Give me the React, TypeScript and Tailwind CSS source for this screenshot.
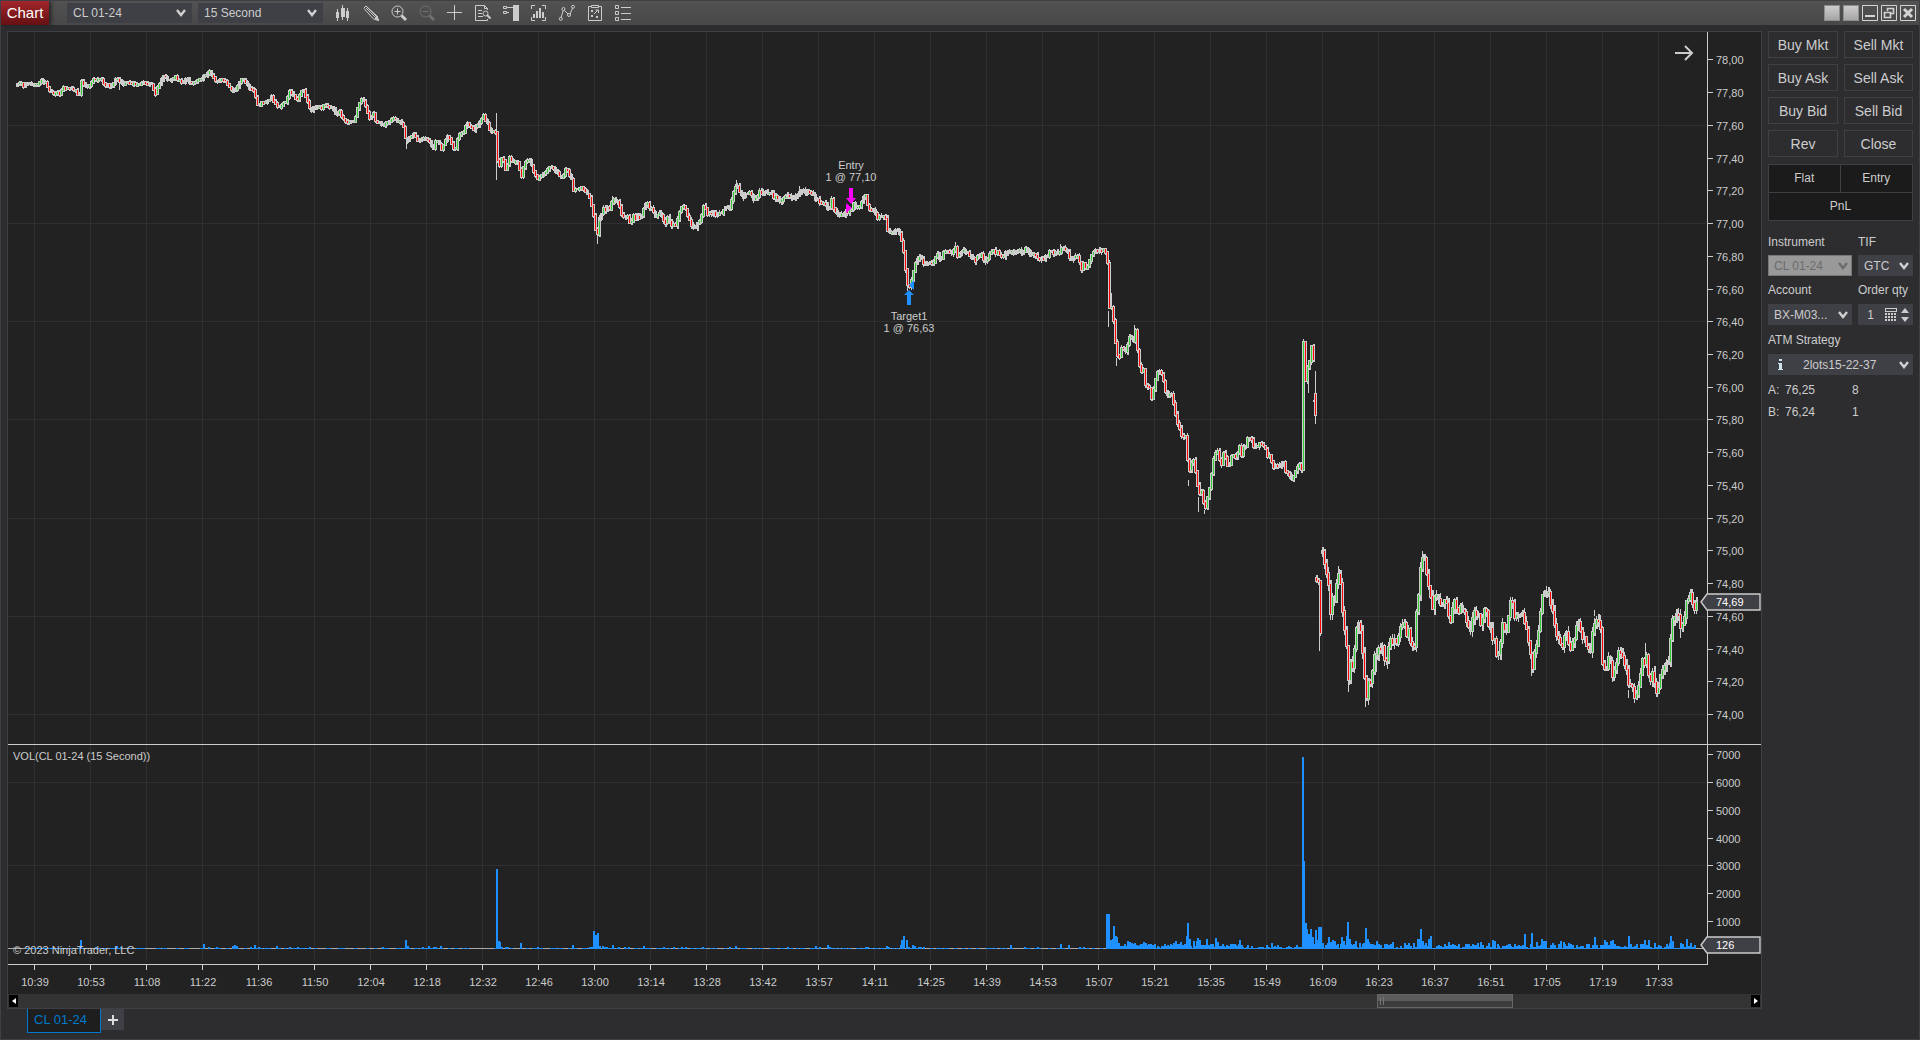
import type { ReactNode } from "react";
import clsx from "clsx";

const TIMES = [
  "10:39", "10:53", "11:08", "11:22", "11:36", "11:50", "12:04", "12:18", "12:32", "12:46",
  "13:00", "13:14", "13:28", "13:42", "13:57", "14:11", "14:25", "14:39", "14:53", "15:07",
  "15:21", "15:35", "15:49", "16:09", "16:23", "16:37", "16:51", "17:05", "17:19", "17:33",
];

interface Trace {
  ox: number;
  oy: number;
  sx: number;
  noise: number;
  pts: number[];
}

// x, y pairs of the price trace, three units to a pixel down and sx across
const TRACES: Trace[] = [
  {
    ox: 0, oy: 30, sx: 2.529, noise: 4,
    pts: [
      42, 168, 50, 158, 62, 168, 75, 155, 90, 162, 112, 150, 128, 190, 150, 188, 158, 175, 178, 175, 200, 192, 205, 156,
      222, 175, 235, 144, 255, 150, 262, 163, 280, 167, 295, 142, 305, 158, 340, 160, 380, 160, 392, 188, 412, 138,
      425, 155, 442, 140, 462, 158, 470, 146, 480, 160, 510, 146, 528, 120, 548, 156, 560, 142, 580, 172, 590, 185,
      612, 146, 630, 176, 640, 182, 650, 225, 680, 212, 685, 200, 702, 235, 722, 216, 730, 180, 750, 206, 765, 180,
      783, 240, 800, 232, 835, 225, 850, 255, 858, 240, 865, 268, 880, 276, 895, 272, 903, 232, 915, 205, 935, 266,
      942, 242, 950, 275, 968, 284, 980, 272, 998, 264, 1020, 288, 1027, 340, 1035, 316, 1045, 315, 1055, 330,
      1077, 325, 1095, 350, 1103, 325, 1115, 358, 1132, 315, 1148, 362, 1160, 310, 1170, 305, 1180, 275, 1195, 300,
      1222, 258, 1240, 302, 1253, 310, 1256, 385, 1262, 405, 1270, 375, 1278, 425, 1287, 378, 1300, 400, 1306, 388,
      1318, 440, 1325, 400, 1335, 385, 1357, 450, 1375, 430, 1390, 412, 1405, 420, 1418, 445, 1430, 415, 1442, 435,
      1450, 482, 1470, 468, 1490, 500, 1500, 560, 1504, 592, 1511, 618, 1516, 565,
    ],
  },
  {
    ox: 480, oy: 100, sx: 3, noise: 6,
    pts: [
      357, 355, 370, 325, 385, 325, 400, 300, 412, 300, 422, 345, 440, 350, 448, 362, 460, 350, 480, 358, 494, 305,
      510, 322, 522, 348, 545, 340, 553, 378, 562, 345, 570, 375, 583, 380, 600, 325, 612, 320, 630, 370, 642, 385,
      660, 355, 668, 318, 680, 340, 700, 338, 710, 345, 735, 325, 748, 320, 757, 285, 769, 258, 788, 290, 805, 275,
      820, 296, 835, 280, 860, 276, 880, 288, 900, 300, 915, 285, 940, 298, 957, 272, 990, 276, 1010, 300, 1022, 315,
      1038, 310, 1044, 340, 1053, 300, 1067, 345, 1080, 345, 1100, 335, 1112, 330, 1118, 310, 1125, 322, 1140, 312,
      1155, 285, 1165, 335, 1180, 325, 1190, 350, 1215, 350, 1222, 400, 1235, 400, 1255, 390, 1268, 450, 1275, 510,
      1280, 560, 1293, 545, 1300, 505, 1315, 465, 1335, 495, 1343, 480, 1355, 498, 1370, 460, 1380, 485, 1390, 455,
      1410, 460, 1415, 468, 1425, 435, 1432, 470, 1450, 455, 1475, 470, 1490, 480,
    ],
  },
  {
    ox: 900, oy: 220, sx: 3, noise: 6,
    pts: [
      232, 114, 240, 105, 258, 122, 272, 95, 290, 95, 305, 105, 330, 94, 370, 94, 378, 85, 390, 105, 400, 98, 412, 118,
      440, 108, 450, 92, 470, 98, 482, 88, 498, 85, 508, 115, 520, 112, 530, 98, 540, 145, 550, 130, 558, 145,
      572, 100, 590, 92, 605, 90, 620, 100, 624, 205, 628, 275, 636, 260, 642, 340, 650, 410, 656, 415, 662, 378,
      678, 395, 685, 345, 700, 360, 705, 330, 712, 405, 720, 460, 726, 435, 737, 500, 744, 485, 752, 540, 760, 505,
      768, 460, 775, 440, 790, 490, 802, 530, 812, 520, 828, 590, 840, 640, 858, 650, 864, 780, 870, 730, 880, 725,
      890, 790, 895, 832, 902, 805, 914, 870, 922, 830, 932, 770, 940, 710, 948, 685, 963, 740, 970, 695, 983, 745,
      995, 695, 1005, 710, 1020, 665, 1022, 705, 1040, 660, 1052, 655, 1060, 680, 1080, 670, 1100, 700, 1110, 710,
      1118, 740, 1135, 735, 1148, 730, 1158, 755, 1170, 775, 1185, 755, 1195, 735, 1205, 748, 1207, 480, 1209, 370,
      1213, 490, 1220, 450, 1228, 415, 1235, 372, 1239, 418,
    ],
  },
  { ox: 1280, oy: 320, sx: 3, noise: 6, pts: [108, 775, 111, 732, 115, 800, 118, 930, 121, 940, 125, 900] },
  {
    ox: 1280, oy: 320, sx: 3, noise: 15,
    pts: [
      127, 700, 131, 715, 137, 750, 145, 810, 150, 870, 155, 820, 160, 865, 168, 795, 175, 765, 180, 790, 185, 870,
      190, 910, 197, 960, 203, 1060, 207, 1065, 212, 990, 218, 1045, 226, 940, 236, 910, 242, 950, 250, 1060,
      258, 1120, 265, 1060, 272, 1095, 280, 1010, 295, 980, 305, 990, 320, 1015, 330, 945, 348, 970, 358, 930,
      370, 905, 378, 960, 383, 905, 393, 975, 402, 975, 410, 860, 418, 770, 427, 705, 435, 740, 443, 780, 450, 830,
      458, 870, 462, 840, 472, 825, 485, 860, 495, 840, 510, 905, 520, 845, 535, 875, 550, 860, 568, 930, 585, 880,
      592, 870, 600, 915, 615, 870, 628, 920, 645, 980, 653, 1018, 665, 910, 675, 940, 690, 845, 710, 895, 728, 880,
      740, 930, 755, 1045, 770, 950, 785, 840, 800, 815, 815, 860, 830, 950, 845, 980, 856, 915, 868, 985, 880, 970,
      896, 895, 905, 950, 928, 1000, 945, 885, 960, 930, 966, 1020, 978, 1045, 988, 1005, 998, 1065, 1016, 985,
      1030, 1035, 1040, 1055, 1048, 1105, 1056, 1095, 1065, 1135, 1085, 1030, 1097, 1010, 1108, 1085, 1115, 1060,
      1128, 1120, 1140, 1070, 1155, 1040, 1165, 1020, 1172, 910, 1185, 880, 1204, 920, 1213, 880, 1224, 830,
      1234, 835, 1242, 865, 1248, 850,
    ],
  },
];

// x, top, bottom of the long wicks
const WICKS = [
  [119, 83, 90], [406, 143, 149], [496, 113, 180], [597, 235, 244], [612, 196, 203], [736, 180, 186], [799, 186, 191],
  [907, 286, 291], [955, 242, 248], [1060, 244, 249], [1108, 311, 327], [1111, 293, 306], [1116, 358, 366],
  [1134, 325, 331], [1188, 480, 486], [1198, 497, 512], [1204, 510, 514], [1308, 376, 393], [1315, 371, 424],
  [1319, 633, 651], [1338, 566, 575], [1348, 674, 692], [1365, 690, 707], [1376, 650, 672], [1387, 655, 669],
  [1422, 551, 557], [1531, 668, 676], [1594, 610, 616], [1612, 678, 682], [1628, 690, 698], [1645, 643, 656],
  [1680, 628, 638], [1691, 591, 597],
];

// x, bar height
const VOLUME = [
  [80, 9], [95, 2], [116, 3], [120, 2], [203, 5], [208, 2], [216, 2], [232, 3], [234, 4], [236, 3], [250, 2], [254, 4],
  [258, 2], [276, 3], [289, 2], [297, 2], [309, 2], [382, 2], [405, 9], [407, 3], [422, 2], [428, 3], [433, 2],
  [435, 2], [440, 3], [496, 80], [498, 8], [499, 7], [501, 2], [505, 2], [507, 2], [520, 6], [537, 2], [572, 4],
  [589, 2], [591, 2], [593, 18], [595, 14], [597, 16], [599, 3], [602, 3], [604, 2], [606, 2], [612, 4], [618, 2],
  [624, 2], [628, 2], [643, 3], [663, 2], [673, 2], [681, 2], [685, 2], [702, 2], [729, 2], [735, 3], [787, 2],
  [815, 3], [819, 2], [827, 4], [829, 2], [865, 2], [867, 2], [886, 3], [888, 2], [900, 4], [901, 9], [903, 13],
  [906, 9], [908, 2], [912, 4], [914, 3], [918, 2], [920, 2], [923, 2], [1010, 4], [1024, 2], [1037, 2], [1060, 5],
  [1068, 4], [1079, 2], [1083, 2], [1106, 35], [1108, 35], [1110, 9], [1112, 10], [1113, 23], [1115, 13], [1116, 12],
  [1118, 6], [1121, 3], [1127, 8], [1129, 7], [1131, 6], [1133, 5], [1134, 6], [1136, 4], [1139, 4], [1143, 7],
  [1145, 6], [1147, 4], [1150, 5], [1152, 4], [1157, 3], [1161, 3], [1167, 4], [1169, 3], [1173, 6], [1175, 8],
  [1177, 5], [1180, 7], [1182, 4], [1185, 5], [1186, 13], [1187, 26], [1189, 10], [1193, 8], [1196, 8], [1197, 11],
  [1199, 9], [1201, 4], [1206, 10], [1212, 5], [1215, 11], [1217, 7], [1223, 3], [1228, 3], [1233, 3], [1235, 4],
  [1238, 5], [1239, 9], [1241, 4], [1247, 4], [1251, 3], [1266, 4], [1271, 6], [1274, 3], [1277, 4], [1288, 3],
  [1296, 4], [1302, 192], [1303, 88], [1305, 26], [1306, 20], [1308, 15], [1310, 20], [1312, 12], [1315, 19],
  [1317, 9], [1318, 22], [1320, 22], [1322, 6], [1325, 4], [1327, 6], [1328, 12], [1330, 7], [1332, 9], [1334, 8],
  [1337, 5], [1341, 12], [1343, 8], [1346, 13], [1347, 27], [1349, 10], [1353, 5], [1355, 8], [1359, 6], [1363, 6],
  [1365, 21], [1367, 10], [1368, 7], [1372, 5], [1376, 8], [1380, 4], [1392, 7], [1404, 6], [1408, 6], [1413, 6],
  [1417, 10], [1419, 10], [1420, 20], [1422, 8], [1425, 6], [1428, 10], [1430, 13], [1448, 7], [1465, 5], [1468, 5],
  [1477, 6], [1480, 7], [1488, 6], [1492, 9], [1494, 8], [1497, 5], [1509, 5], [1524, 15], [1531, 16], [1536, 7],
  [1541, 10], [1543, 8], [1545, 8], [1552, 6], [1560, 8], [1563, 7], [1568, 6], [1594, 12], [1604, 9], [1606, 7],
  [1610, 8], [1612, 9], [1628, 13], [1636, 5], [1644, 9], [1648, 9], [1654, 6], [1669, 6], [1670, 13], [1672, 8],
  [1680, 6], [1686, 10], [1690, 6],
];

function makeRandom(seed: number) {
  let s = seed;
  return () => {
    s = (s * 16807) % 2147483647;
    return s / 2147483647;
  };
}

const rect = (x: number, y: number, w: number, h: number) => `M${x} ${y}h${w}v${h}h${-w}z`;

function buildCandles() {
  const rnd = makeRandom(77);
  let outline = "";
  let up = "";
  let down = "";
  for (const t of TRACES) {
    const xs: number[] = [];
    const ys: number[] = [];
    for (let i = 0; i < t.pts.length; i += 2) {
      xs.push(t.ox + t.pts[i] / t.sx);
      ys.push(t.oy + t.pts[i + 1] / 3);
    }
    let prev = Math.round(ys[0]);
    let k = 0;
    for (let x = Math.round(xs[0]); x <= xs[xs.length - 1]; x += 2) {
      while (k < xs.length - 2 && xs[k + 1] < x) k++;
      const f = Math.min(1, Math.max(0, (x - xs[k]) / (xs[k + 1] - xs[k])));
      const y = Math.round(ys[k] + (ys[k + 1] - ys[k]) * f + ((rnd() - 0.5) * t.noise * 2) / 3);
      const top = Math.min(prev, y) - 1;
      const h = Math.abs(y - prev) + (rnd() > 0.35 ? 3 : 2);
      outline += rect(x - 1, top, 3, h);
      if (h > 2 && (h > 7 || rnd() > 0.4)) {
        if (y <= prev) up += rect(x, top + 1, 1, h - 2);
        else down += rect(x, top + 1, 1, h - 2);
      }
      const high = Math.round(rnd() * t.noise * 0.35);
      const low = Math.round(rnd() * t.noise * 0.35);
      outline += rect(x, top - high, rnd() > 0.5 ? 2 : 1, high);
      outline += rect(x, top + h, rnd() > 0.5 ? 2 : 1, low);
      prev = y;
    }
  }
  for (const [x, a, b] of WICKS) outline += rect(x, a, 1, b - a);
  return { outline, up, down };
}

function buildVolume() {
  const rnd = makeRandom(4242);
  let d = "";
  for (let x = 24; x < 1696; x += 2) {
    if (x < 1106) {
      if (rnd() > 0.6) d += rect(x, 948, 3, 1);
    } else {
      const busy = x < 1240 || x > 1302;
      const h = 1 + Math.floor(rnd() * (busy ? 5 : 2));
      d += rect(x, 949 - h, 2, h);
    }
  }
  for (const [x, h] of VOLUME) d += rect(x, 949 - h, 2, h);
  return d;
}

const candles = buildCandles();
const volume = buildVolume();

const PRICE_TICKS = Array.from({ length: 21 }, (_, i) => ({
  y: Math.round(714 - i * 32.73),
  label: (74 + i * 0.2).toFixed(2).replace(".", ","),
}));
const VOL_TICKS = [7, 6, 5, 4, 3, 2, 1].map(n => ({ y: Math.round(948.6 - n * 27.77), label: `${n}000` }));

function PriceTag({ y, label }: { y: number; label: string }) {
  return (
    <g>
      <path d={`M1701 ${y}L1707 ${y - 8}H1760V${y + 8}H1707z`} fill="#3f3f46" stroke="#cccccc" strokeWidth={1.4} />
      <text x={1716} y={y + 4} className="fill-white">{label}</text>
    </g>
  );
}

function Chart() {
  return (
    <svg viewBox="8 32 1753 962" preserveAspectRatio="xMinYMin meet" className="block h-full w-full text-[11px]" fill="#cccccc">
      <g shapeRendering="crispEdges">
        {/* Grid */}
        {TIMES.map((t, i) => <rect key={t} x={34 + i * 56} y={32} width={1} height={929} fill="#303032" />)}
        {[125, 223, 321, 419, 518, 616, 714, 782, 865].map(y => (
          <rect key={y} x={8} y={y} width={1698} height={1} fill="#303032" />
        ))}

        {/* Volume */}
        <rect x={8} y={948} width={1696} height={1} fill="#aaaaaa" />
        <path d={volume} fill="#1e90ff" />

        {/* Price */}
        <path d={candles.outline} fill="#cccccc" />
        <path d={candles.up} fill="#32cd32" />
        <path d={candles.down} fill="#ff0000" />
        <path d="M1313 400h2v2h-2zM1314 393h3v23h-3z" fill="#cccccc" />
        <path d="M1315 394h1v21h-1z" fill="#ff0000" />

        {/* Axes */}
        <rect x={1707} y={32} width={1} height={933} />
        <rect x={8} y={744} width={1753} height={1} />
        <rect x={8} y={964} width={1700} height={1} />
        {[...PRICE_TICKS, ...VOL_TICKS].map(t => <rect key={t.label} x={1708} y={t.y} width={5} height={1} />)}
        {TIMES.map((t, i) => <rect key={t} x={34 + i * 56} y={965} width={1} height={5} />)}
      </g>

      {[...PRICE_TICKS, ...VOL_TICKS].map(t => <text key={t.label} x={1716} y={t.y + 5}>{t.label}</text>)}
      {TIMES.map((t, i) => <text key={t} x={35 + i * 56} y={986} textAnchor="middle">{t}</text>)}
      <PriceTag y={602} label="74,69" />
      <PriceTag y={945} label="126" />
      <text x={13} y={760}>VOL(CL 01-24 (15 Second))</text>
      <text x={13} y={954}>© 2023 NinjaTrader, LLC</text>

      {/* Executions */}
      <g textAnchor="middle">
        <text x={851} y={169}>Entry</text>
        <text x={851} y={181}>1 @ 77,10</text>
        <text x={909} y={320}>Target1</text>
        <text x={909} y={332}>1 @ 76,63</text>
      </g>
      <path d="M849 188h4v10h3l-5 6-5-6h3zM846 203l6 5-6 5z" fill="#ff00ff" />
      <path d="M909 290l5 5h-3v10h-4v-10h-3zM914 280v10l-5-5z" fill="#1e90ff" />

      <path d="M1675 53h17M1685 46l7 7-7 7" fill="none" stroke="#cccccc" strokeWidth={2} />
    </svg>
  );
}

function Chevron({ className }: { className?: string }) {
  return (
    <svg viewBox="0 0 10 8" className={clsx("pointer-events-none absolute top-1/2 h-2 w-[10px] -translate-y-1/2", className)} fill="none" stroke="currentColor" strokeWidth={2.4}>
      <path d="M1 1l4 5 4-5" />
    </svg>
  );
}

interface PickerProps {
  id: string;
  value: string;
  label?: string;
  className?: string;
  selectClass?: string;
  chevronClass?: string;
  disabled?: boolean;
}

function Picker({ id, value, label, className, selectClass = "px-[6px]", chevronClass = "right-1 text-[#d0d0d0]", disabled }: PickerProps) {
  return (
    <div className={clsx("relative", className)}>
      <select
        id={id}
        aria-label={label}
        disabled={disabled}
        className={clsx(
          "block h-full w-full appearance-none text-xs outline-none disabled:opacity-100",
          disabled ? "border border-[#777777] bg-[#999999] text-[#6c6c6c]" : "bg-[#3f3f46] text-[#cccccc]",
          selectClass
        )}
      >
        <option>{value}</option>
      </select>
      <Chevron className={chevronClass} />
    </div>
  );
}

const TOOLS: { name: string; dim?: boolean; icon: ReactNode }[] = [
  {
    name: "Chart style",
    icon: <path fill="currentColor" stroke="none" d="M1 7h1V4h1v3h1v6H3v3H2v-3H1zM6 3h1V0h1v3h2v9H8v3H7v-3H6zM11 6h1V3h1v3h1v7h-1v3h-1v-3h-1z" />,
  },
  {
    name: "Drawing tools",
    icon: <><path d="M1 3l2-2 9 9M3 1L14 11l1.500 4.500L10.500 14 1 3.500M3 3l9 9M4 2l9 9" /><path fill="currentColor" d="M12 13l2-2 1.500 4.500z" /></>,
  },
  {
    name: "Zoom in",
    icon: <><circle cx="6.500" cy="6.500" r="5.500" /><path d="M3.500 6.500h6M6.500 3.500v6" /><path strokeWidth="3" d="M10.500 10.500l4.500 4.500" /></>,
  },
  {
    name: "Zoom out",
    dim: true,
    icon: <><circle cx="6.500" cy="6.500" r="5.500" /><path d="M3.500 6.500h6" /><path strokeWidth="3" d="M10.500 10.500l4.500 4.500" /></>,
  },
  { name: "Cross hair", icon: <path d="M0 7.500h15M7.500 0v15" /> },
  {
    name: "Data series",
    icon: <><path d="M12.500 5V3.500l-3-3h-9v15h12V14M9.500 .500v3h3M3 5.500h4M3 8.500h4M3 11.500h5" /><circle cx="10.500" cy="8.500" r="2.500" /><path strokeWidth="2" d="M12 10l3.500 3.500" /></>,
  },
  {
    name: "Chart trader",
    icon: <><path fill="currentColor" stroke="none" d="M10 0h6v16h-6z" /><path d="M.500 1.500h3v2h-3zM.500 6.500h3v2h-3zM4 2.500h6M4 7.500h2" /></>,
  },
  {
    name: "Indicators",
    icon: <><path d="M.500 4V.500H4M11 .500h3.500V4M.500 12v3.500H4M11 15.500h3.500V12" /><path fill="currentColor" stroke="none" d="M2 9h2v4H2zM5 6h2v7H5zM8 3h2v10H8zM11 7h2v6h-2z" /></>,
  },
  {
    name: "Strategies",
    icon: <><path d="M2 13l2.500-8.500 6 6L14 2" /><g fill="#4d4d4d"><circle cx="1.800" cy="13.800" r="1.500" /><circle cx="4.500" cy="4" r="1.500" /><circle cx="10" cy="10" r="1.500" /><circle cx="14" cy="1.800" r="1.500" /></g></>,
  },
  {
    name: "Properties",
    icon: <><path d="M4 1.500H1.500v14h13v-14H12M4.500 .500h7v2h-7zM4 5l2 2M6 5L4 7M4 10l2 2M6 10l-2 2M9 11l2 2M11 11l-2 2M7 9l4-4M8.500 5H11.500V8" /></>,
  },
  {
    name: "List",
    icon: <path d="M.500 .500h3v3h-3zM.500 6.500h3v3h-3zM.500 12.500h3v3h-3zM6 2.500h10M6 8.500h10M6 14.500h10" />,
  },
];

function TitleBar() {
  return (
    <header className="flex h-6 shrink-0 items-center bg-linear-to-b from-[#525252] to-[#484848] pr-[3px]">
      <div className="flex h-full w-12 items-center justify-center bg-linear-to-b from-[#a3262b] to-[#651013] text-[15px] text-white shadow-[2px_0_4px_#222222]">
        Chart
      </div>
      <Picker id="symbol" label="Instrument selector" value="CL 01-24" className="ml-[18px] h-5 w-[125px]" chevronClass="right-[6px] text-[#d0d0d0]" />
      <Picker id="interval" label="Interval selector" value="15 Second" className="ml-[6px] h-5 w-[125px]" chevronClass="right-[6px] text-[#d0d0d0]" />
      <div className="ml-3 flex gap-3">
        {TOOLS.map(t => (
          <button key={t.name} aria-label={t.name} disabled={t.dim} className={clsx("h-4 w-4", t.dim ? "text-[#707070]" : "text-[#cccccc]")}>
            <svg viewBox="0 0 16 16" className="block h-4 w-4 overflow-visible" fill="none" stroke="currentColor" strokeWidth={1}>
              {t.icon}
            </svg>
          </button>
        ))}
      </div>
      <div className="ml-auto flex gap-[3px] text-[#d4d4d4]">
        <button aria-label="Link instrument" className="h-4 w-4 border border-[#8d8d8d] bg-linear-to-b from-[#cccccc] to-[#a8a4a6]" />
        <button aria-label="Link interval" className="h-4 w-4 border border-[#8d8d8d] bg-linear-to-b from-[#cccccc] to-[#a8a4a6]" />
        <WindowButton name="Minimize"><path d="M3 10h10v2H3z" fill="currentColor" stroke="none" /></WindowButton>
        <WindowButton name="Restore">
          <path d="M6.500 6V3.500h6v5H10M3.500 7.500h6v5h-6z" strokeWidth="1.600" />
        </WindowButton>
        <WindowButton name="Close window"><path d="M4 4l8 8M12 4l-8 8" strokeWidth="3" /></WindowButton>
      </div>
    </header>
  );
}

function WindowButton({ name, children }: { name: string; children: ReactNode }) {
  return (
    <button aria-label={name} className="h-4 w-4">
      <svg viewBox="0 0 16 16" className="block h-4 w-4" fill="none" stroke="currentColor">
        <path d="M.500 .500h15v15H.500z" />
        {children}
      </svg>
    </button>
  );
}

const ORDERS = ["Buy Mkt", "Sell Mkt", "Buy Ask", "Sell Ask", "Buy Bid", "Sell Bid", "Rev", "Close"];

function OrderPanel() {
  return (
    <aside className="w-[145px] shrink-0 text-xs">
      <div className="grid grid-cols-[70px_1fr] gap-[6px]">
        {ORDERS.map(o => (
          <button key={o} className="h-[27px] border border-[#3f3f46] text-sm">{o}</button>
        ))}
      </div>

      {/* Position */}
      <div className="mt-[7px] grid grid-cols-2 border border-[#3f3f46] bg-[#1b1b1b] text-center leading-[27px]">
        <div className="border-r border-[#3f3f46]">Flat</div>
        <div>Entry</div>
        <div className="col-span-2 border-t border-[#3f3f46]">PnL</div>
      </div>

      <div className="mt-3 grid grid-cols-[84px_1fr] gap-x-[6px]">
        <label htmlFor="instrument" className="h-[22px] leading-[18px]">Instrument</label>
        <label htmlFor="tif" className="h-[22px] leading-[18px]">TIF</label>
        <Picker id="instrument" value="CL 01-24" disabled className="h-[21px]" selectClass="px-[5px]" chevronClass="right-1 text-[#6c6c6c]" />
        <Picker id="tif" value="GTC" className="h-[21px]" />
        <label htmlFor="account" className="mt-[6px] h-[22px] leading-4">Account</label>
        <label htmlFor="qty" className="mt-[6px] h-[22px] leading-4">Order qty</label>
        <Picker id="account" value="BX-M03..." className="h-[21px]" />
        <div className="flex h-[21px] items-center bg-[#3f3f46] pr-1">
          <input id="qty" type="text" inputMode="numeric" defaultValue="1" className="w-0 flex-1 bg-transparent pr-0.5 text-center outline-none" />
          <button aria-label="Calculator">
            <svg viewBox="0 0 12 13" className="block h-[13px] w-3" fill="currentColor" shapeRendering="crispEdges">
              <path d="M0 0h12v4H0zM1 1v2h10V1z" fillRule="evenodd" />
              {[5, 8, 11].map(y => [0, 3, 6, 9].map(x => <rect key={`${x}-${y}`} x={x} y={y} width={2} height={2} />))}
            </svg>
          </button>
          <div className="ml-1 flex flex-col gap-1">
            <button aria-label="Increase"><svg viewBox="0 0 8 5" className="block h-[5px] w-2" fill="currentColor"><path d="M4 0l4 5H0z" /></svg></button>
            <button aria-label="Decrease"><svg viewBox="0 0 8 5" className="block h-[5px] w-2" fill="currentColor"><path d="M4 5L0 0h8z" /></svg></button>
          </div>
        </div>
      </div>

      <label htmlFor="atm" className="mt-[6px] block h-[23px] leading-[18px]">ATM Strategy</label>
      <div className="flex h-[21px] bg-[#3f3f46]">
        <button aria-label="Strategy info" className="flex w-6 items-center justify-center text-[#cfe0ee]">
          <svg viewBox="0 0 5 11" className="block h-[11px] w-[5px]" fill="currentColor" shapeRendering="crispEdges"><path d="M1 0h3v2H1zM0 4h4v6h1v1H0v-1h1V5H0z" /></svg>
        </button>
        <Picker id="atm" value="2lots15-22-37" className="flex-1" selectClass="pl-[11px]" />
      </div>

      <dl className="mt-1 grid grid-cols-[17px_67px_1fr] leading-[22px]">
        <dt>A:</dt><dd>76,25</dd><dd>8</dd>
        <dt>B:</dt><dd>76,24</dd><dd>1</dd>
      </dl>
    </aside>
  );
}

function ScrollStrip() {
  return (
    <div className="flex h-[14px] shrink-0 items-center bg-[#333333] px-px">
      <button aria-label="Scroll left" className="flex h-3 w-[9px] items-center justify-center bg-black text-white">
        <svg viewBox="0 0 4 6" className="h-[6px] w-1" fill="currentColor"><path d="M4 0v6L0 3z" /></svg>
      </button>
      <div className="grow-[1359]" />
      <div className="flex h-[14px] w-[136px] items-center gap-0.5 border border-[#666666] bg-linear-to-b from-[#5c5c5c] from-50% to-[#3c3c3c] to-50% pl-0.5">
        <div className="h-2 w-px bg-[#777777]" />
        <div className="h-2 w-px bg-[#777777]" />
      </div>
      <div className="grow-[238]" />
      <button aria-label="Scroll right" className="flex h-3 w-[9px] items-center justify-center bg-black text-white">
        <svg viewBox="0 0 4 6" className="h-[6px] w-1" fill="currentColor"><path d="M0 0v6l4-3z" /></svg>
      </button>
    </div>
  );
}

export default function App() {
  return (
    <div className="flex h-screen flex-col overflow-hidden border border-[#3f3f46] bg-[#2d2d30] font-['Liberation_Sans',Arial,sans-serif] text-[#cccccc]">
      <TitleBar />
      <div className="flex min-h-0 flex-1 gap-[6px] px-[6px] pt-[6px]">
        <main className="flex min-w-0 flex-1 flex-col border border-[#3f3f46] bg-[#222222]">
          <div className="min-h-0 flex-1">
            <Chart />
          </div>
          <ScrollStrip />
        </main>
        <OrderPanel />
      </div>
      <nav className="flex h-[30px] shrink-0 items-start pl-[26px]">
        <button className="h-6 w-[74px] border border-t-0 border-[#007acc] bg-[#1e1e1e] pb-0.5 text-left text-[13px] text-[#007acc]">
          <span className="pl-[6px]">CL 01-24</span>
        </button>
        <button aria-label="New tab" className="flex h-[21px] w-[23px] items-center justify-center bg-[#3f3f46]">
          <svg viewBox="0 0 10 10" className="h-[10px] w-[10px]" stroke="#dddddd" strokeWidth={2}><path d="M0 5h10M5 0v10" /></svg>
        </button>
      </nav>
    </div>
  );
}
